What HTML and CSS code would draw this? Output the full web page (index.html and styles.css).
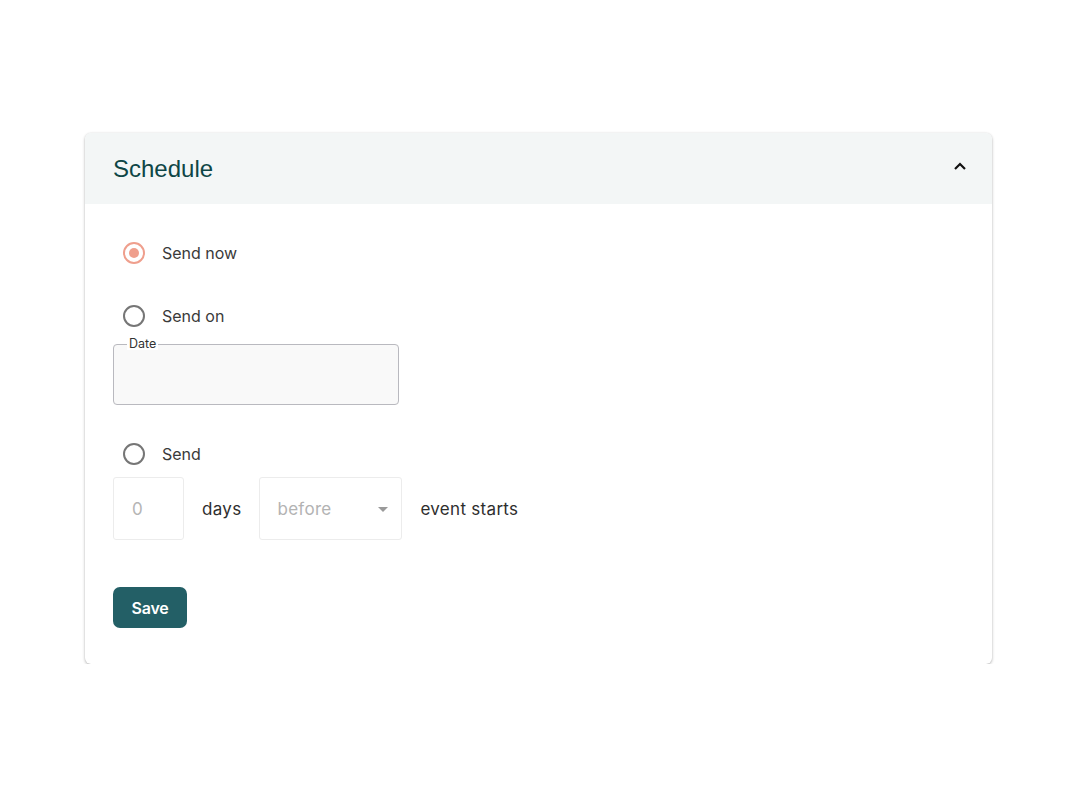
FILE: index.html
```html
<!DOCTYPE html>
<html>
<head>
<meta charset="utf-8">
<link rel="stylesheet" href="styles.css">
</head>
<body>
<div class="page">
  <section class="card">
    <header class="card-header">
      <h2 class="title">Schedule</h2>
      <svg class="chevron" width="14" height="10" viewBox="0 0 14 10"><path d="M2 8 L7 3 L12 8" fill="none" stroke="#111" stroke-width="2.2"/></svg>
    </header>
    <div class="card-body">
      <label class="radio-row first">
        <span class="radio checked"></span>
        <span class="radio-label">Send now</span>
      </label>
      <label class="radio-row second">
        <span class="radio"></span>
        <span class="radio-label">Send on</span>
      </label>
      <fieldset class="date-field">
        <legend class="date-legend">Date</legend>
      </fieldset>
      <label class="radio-row third">
        <span class="radio"></span>
        <span class="radio-label">Send</span>
      </label>
      <div class="relative-row">
        <div class="num-box">0</div>
        <span class="row-text">days</span>
        <div class="select-box">
          <span>before</span>
          <svg width="10" height="5" viewBox="0 0 10 5"><path d="M0 0 L10 0 L5 5 Z" fill="#9a9a9a"/></svg>
        </div>
        <span class="row-text">event starts</span>
      </div>
      <button class="save-btn">Save</button>
    </div>
  </section>
</div>
</body>
</html>
```

FILE: styles.css
```css
html, body {
  margin: 0;
  padding: 0;
  background: #ffffff;
}
body {
  font-family: "Inter", "Liberation Sans", sans-serif;
  color: #2b2b2b;
}
.page {
  padding: 133px 88px 0 85px;
}
.card {
  width: 907px;
  background: #fff;
  border-radius: 6px;
  box-shadow: 0 1px 3px rgba(0,0,0,0.3), 0 0 1px rgba(0,0,0,0.1);
  overflow: hidden;
}
.card-header {
  height: 71px;
  background: #f3f6f6;
  display: flex;
  align-items: center;
  justify-content: space-between;
  padding: 0 25px 0 28px;
}
.title {
  margin: 0;
  font-family: "Liberation Sans", Arial, sans-serif;
  font-weight: 400;
  font-size: 24px;
  color: #0e4646;
  padding-top: 1px;
}
.chevron {
  margin-top: -6px;
}
.card-body {
  padding: 28px 28px 36px 28px;
  display: flex;
  flex-direction: column;
  align-items: flex-start;
}
.radio-row {
  display: flex;
  align-items: center;
  height: 42px;
  gap: 17px;
  padding-left: 10px;
}
.radio-row.second {
  margin-top: 21px;
}
.radio-row.third {
  margin-top: 28px;
}
.radio {
  width: 18px;
  height: 18px;
  border: 2px solid #767676;
  border-radius: 50%;
  box-sizing: content-box;
  position: relative;
}
.radio.checked {
  border-color: #ef9f8d;
}
.radio.checked::after {
  content: "";
  position: absolute;
  left: 4px;
  top: 4px;
  width: 10px;
  height: 10px;
  border-radius: 50%;
  background: #ef9f8d;
}
.radio-label {
  font-size: 16px;
  color: #3a3a3a;
  letter-spacing: 0;
}
.date-field {
  margin: 1px 0 0 0;
  width: 286px;
  height: 67px;
  box-sizing: border-box;
  border: 1px solid #b9b9bf;
  border-radius: 4px;
  background: #f9f9f9;
  padding: 0 0 0 13px;
}
.date-legend {
  font-size: 12.5px;
  color: #333;
  padding: 0 2px;
  line-height: 12px;
  background: #fff;
}
.relative-row {
  display: flex;
  align-items: center;
  margin-top: 2px;
  gap: 18px;
}
.num-box {
  width: 71px;
  height: 63px;
  box-sizing: border-box;
  border: 1px solid #ececec;
  border-radius: 3px;
  display: flex;
  align-items: center;
  padding-left: 18px;
  font-size: 17px;
  color: #b5b5b5;
}
.row-text {
  font-size: 17px;
  color: #2e2e2e;
  letter-spacing: 0.3px;
}
.select-box {
  width: 143px;
  height: 63px;
  box-sizing: border-box;
  border: 1px solid #ececec;
  border-radius: 3px;
  display: flex;
  align-items: center;
  justify-content: space-between;
  padding: 0 13px 0 17px;
  font-size: 17px;
  color: #b3b3b3;
  letter-spacing: 0.3px;
}
.select-box svg {
  margin-top: 1px;
}
.save-btn {
  margin-top: 47px;
  width: 74px;
  height: 41px;
  border: none;
  border-radius: 7px;
  background: #235f66;
  color: #fff;
  font-family: "Inter", "Liberation Sans", sans-serif;
  font-weight: 600;
  font-size: 16px;
  letter-spacing: -0.2px;
  padding: 0;
}
```
